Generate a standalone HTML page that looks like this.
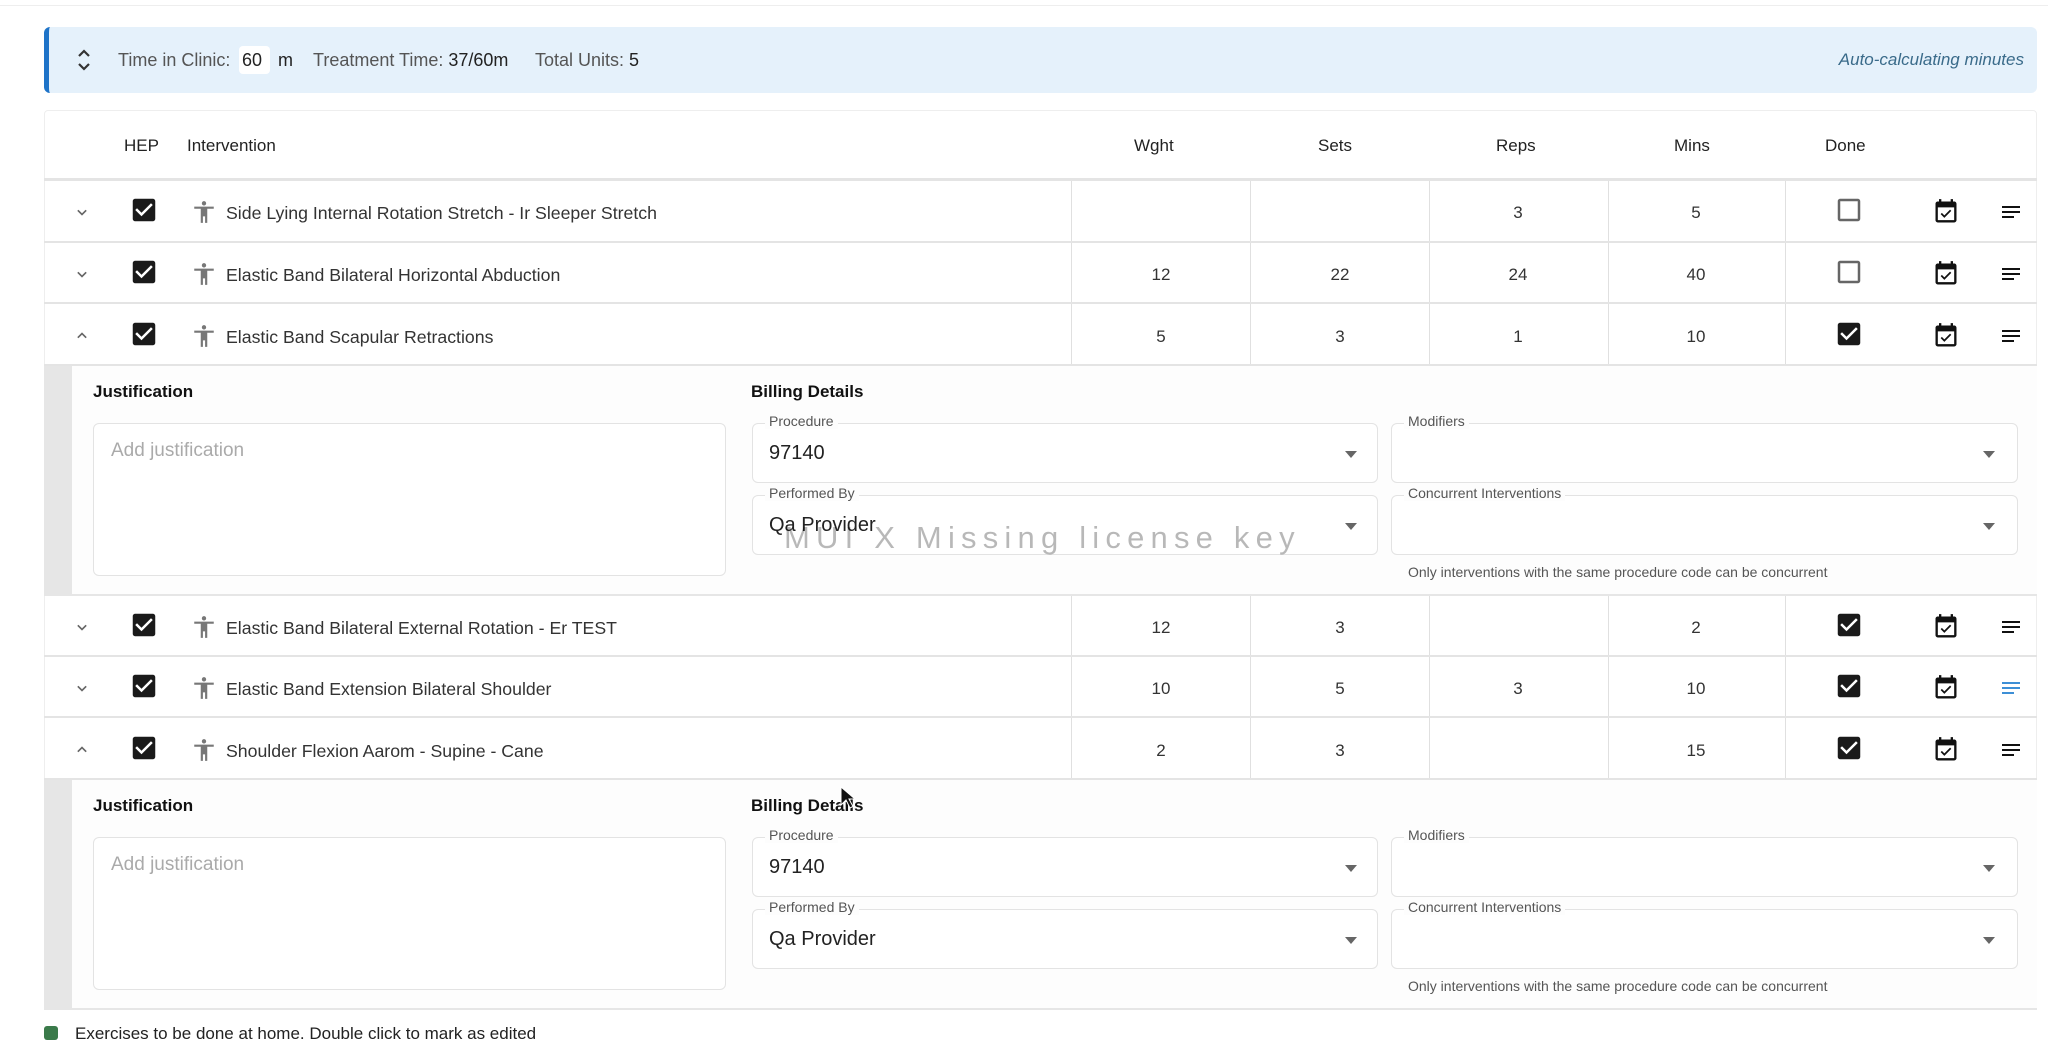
<!DOCTYPE html>
<html><head><meta charset="utf-8"><style>
*{box-sizing:border-box;margin:0;padding:0}
body{width:2048px;height:1029px;overflow:hidden;background:#fff;font-family:"Liberation Sans",sans-serif;color:#333;position:relative}
.a{position:absolute}
.banner{left:44px;top:27px;width:1993px;height:66px;background:#e5f1fb;border-left:5px solid #1e73c8;border-radius:6px}
.bt{font-size:18px;color:#555;top:50px;white-space:nowrap}
.bt b{font-weight:normal;color:#222}
.card{left:44px;top:110px;width:1993px;height:900px;background:#fff;border:1px solid #eee;border-radius:4px}
.hd{font-size:17px;color:#222;top:136px}
.row{left:44px;width:1993px;border-bottom:2px solid #e4e4e4}
.vl{position:absolute;top:0;bottom:0;width:1px;background:#e0e0e0}
.name{font-size:17.7px;color:#333;left:226px;white-space:nowrap}
.num{font-size:17px;color:#333;width:80px;text-align:center}
.panel{left:44px;width:1993px;height:230px;background:#fdfdfd;border-bottom:2px solid #e6e6e6}
.gbar{left:0;top:0;width:28px;height:100%;background:#e6e6e6}
.lbl{font-size:17px;font-weight:bold;color:#111}
.fld{border:1px solid #e3e3e3;border-radius:6px;background:#fff}
.flab{font-size:14px;color:#555;background:#fdfdfd;padding:0 4px;white-space:nowrap}
.val{font-size:20px;color:#222}
.arr{width:0;height:0;border-left:6px solid transparent;border-right:6px solid transparent;border-top:7px solid #666}
.help{font-size:14px;color:#555;white-space:nowrap}
svg{position:absolute}
</style></head><body>
<div class="a" style="left:0;top:5px;width:2048px;height:1px;background:#eee"></div>
<div class="a banner"></div>
<svg style="left:76px;top:48px" width="16" height="24" viewBox="0 0 16 24"><path d="M3 8l5-5 5 5M3 16l5 5 5-5" fill="none" stroke="#333" stroke-width="2.2"/></svg>
<div class="a bt" style="left:118px">Time in Clinic:</div>
<div class="a" style="left:239px;top:46px;width:31px;height:28px;background:#fff;border-radius:4px"></div>
<div class="a bt" style="left:242px"><b>60</b></div>
<div class="a bt" style="left:278px"><b>m</b></div>
<div class="a bt" style="left:313px">Treatment Time: <b>37/60m</b></div>
<div class="a bt" style="left:535px">Total Units: <b>5</b></div>
<div class="a bt" style="left:1830px;width:194px;text-align:right;font-style:italic;color:#3a6b8a;font-size:17px">Auto-calculating minutes</div>

<div class="a card"></div>
<div class="a hd" style="left:124px">HEP</div>
<div class="a hd" style="left:187px">Intervention</div>
<div class="a hd" style="left:1134px">Wght</div>
<div class="a hd" style="left:1318px">Sets</div>
<div class="a hd" style="left:1496px">Reps</div>
<div class="a hd" style="left:1674px">Mins</div>
<div class="a hd" style="left:1825px">Done</div>
<div class="a" style="left:44px;top:178px;width:1993px;height:3px;background:#e4e4e4"></div>

<div class="a row" style="top:181px;height:62px"><div class="vl" style="left:1027px"></div><div class="vl" style="left:1206px"></div><div class="vl" style="left:1385px"></div><div class="vl" style="left:1564px"></div><div class="vl" style="left:1741px"></div></div>
<div class="a row" style="top:243px;height:61px"><div class="vl" style="left:1027px"></div><div class="vl" style="left:1206px"></div><div class="vl" style="left:1385px"></div><div class="vl" style="left:1564px"></div><div class="vl" style="left:1741px"></div></div>
<div class="a row" style="top:304px;height:62px"><div class="vl" style="left:1027px"></div><div class="vl" style="left:1206px"></div><div class="vl" style="left:1385px"></div><div class="vl" style="left:1564px"></div><div class="vl" style="left:1741px"></div></div>
<div class="a row" style="top:596px;height:61px"><div class="vl" style="left:1027px"></div><div class="vl" style="left:1206px"></div><div class="vl" style="left:1385px"></div><div class="vl" style="left:1564px"></div><div class="vl" style="left:1741px"></div></div>
<div class="a row" style="top:657px;height:61px"><div class="vl" style="left:1027px"></div><div class="vl" style="left:1206px"></div><div class="vl" style="left:1385px"></div><div class="vl" style="left:1564px"></div><div class="vl" style="left:1741px"></div></div>
<div class="a row" style="top:718px;height:62px"><div class="vl" style="left:1027px"></div><div class="vl" style="left:1206px"></div><div class="vl" style="left:1385px"></div><div class="vl" style="left:1564px"></div><div class="vl" style="left:1741px"></div></div>

<!-- Row 1 -->
<svg style="left:72px;top:202px" width="20" height="20" viewBox="0 0 24 24"><path d="M7 10l5 5 5-5" fill="none" stroke="#666" stroke-width="2"/></svg>
<svg style="left:129px;top:195px" width="30" height="30" viewBox="0 0 24 24"><path fill="#1a1a1a" d="M19 3H5c-1.11 0-2 .9-2 2v14c0 1.1.89 2 2 2h14c1.11 0 2-.9 2-2V5c0-1.1-.89-2-2-2zm-9 14l-5-5 1.41-1.41L10 14.17l7.59-7.59L19 8l-9 9z"/></svg>
<svg style="left:191px;top:199px" width="26" height="26" viewBox="0 0 24 24"><path fill="#777" d="M12 2c1.1 0 2 .9 2 2s-.9 2-2 2-2-.9-2-2 .9-2 2-2zm9 7h-6v13h-2v-6h-2v6H9V9H3V7h18v2z"/></svg>
<div class="a name" style="top:203px">Side Lying Internal Rotation Stretch - Ir Sleeper Stretch</div>
<div class="a num" style="left:1478px;top:203px">3</div>
<div class="a num" style="left:1656px;top:203px">5</div>
<svg style="left:1834px;top:195px" width="30" height="30" viewBox="0 0 24 24"><path fill="#666" d="M19 5v14H5V5h14m0-2H5c-1.1 0-2 .9-2 2v14c0 1.1.9 2 2 2h14c1.1 0 2-.9 2-2V5c0-1.1-.9-2-2-2z"/></svg>
<svg style="left:1932px;top:198px" width="28" height="28" viewBox="0 0 24 24"><path fill="#111" d="M16.53 11.06L15.47 10l-4.88 4.88-2.12-2.12-1.06 1.06L10.59 17l5.94-5.94zM19 3h-1V1h-2v2H8V1H6v2H5c-1.11 0-1.99.9-1.99 2L3 19c0 1.1.89 2 2 2h14c1.1 0 2-.9 2-2V5c0-1.1-.9-2-2-2zm0 16H5V8h14v11z"/></svg>
<svg style="left:1999px;top:200px" width="24" height="24" viewBox="0 0 24 24"><path fill="#111" d="M3 6h18v2H3zM3 11h18v2H3zM3 16h12v2H3z"/></svg>

<!-- Row 2 -->
<svg style="left:72px;top:264px" width="20" height="20" viewBox="0 0 24 24"><path d="M7 10l5 5 5-5" fill="none" stroke="#666" stroke-width="2"/></svg>
<svg style="left:129px;top:257px" width="30" height="30" viewBox="0 0 24 24"><path fill="#1a1a1a" d="M19 3H5c-1.11 0-2 .9-2 2v14c0 1.1.89 2 2 2h14c1.11 0 2-.9 2-2V5c0-1.1-.89-2-2-2zm-9 14l-5-5 1.41-1.41L10 14.17l7.59-7.59L19 8l-9 9z"/></svg>
<svg style="left:191px;top:261px" width="26" height="26" viewBox="0 0 24 24"><path fill="#777" d="M12 2c1.1 0 2 .9 2 2s-.9 2-2 2-2-.9-2-2 .9-2 2-2zm9 7h-6v13h-2v-6h-2v6H9V9H3V7h18v2z"/></svg>
<div class="a name" style="top:265px">Elastic Band Bilateral Horizontal Abduction</div>
<div class="a num" style="left:1121px;top:265px">12</div>
<div class="a num" style="left:1300px;top:265px">22</div>
<div class="a num" style="left:1478px;top:265px">24</div>
<div class="a num" style="left:1656px;top:265px">40</div>
<svg style="left:1834px;top:257px" width="30" height="30" viewBox="0 0 24 24"><path fill="#666" d="M19 5v14H5V5h14m0-2H5c-1.1 0-2 .9-2 2v14c0 1.1.9 2 2 2h14c1.1 0 2-.9 2-2V5c0-1.1-.9-2-2-2z"/></svg>
<svg style="left:1932px;top:260px" width="28" height="28" viewBox="0 0 24 24"><path fill="#111" d="M16.53 11.06L15.47 10l-4.88 4.88-2.12-2.12-1.06 1.06L10.59 17l5.94-5.94zM19 3h-1V1h-2v2H8V1H6v2H5c-1.11 0-1.99.9-1.99 2L3 19c0 1.1.89 2 2 2h14c1.1 0 2-.9 2-2V5c0-1.1-.9-2-2-2zm0 16H5V8h14v11z"/></svg>
<svg style="left:1999px;top:262px" width="24" height="24" viewBox="0 0 24 24"><path fill="#111" d="M3 6h18v2H3zM3 11h18v2H3zM3 16h12v2H3z"/></svg>

<!-- Row 3 -->
<svg style="left:72px;top:326px" width="20" height="20" viewBox="0 0 24 24"><path d="M7 14l5-5 5 5" fill="none" stroke="#666" stroke-width="2"/></svg>
<svg style="left:129px;top:319px" width="30" height="30" viewBox="0 0 24 24"><path fill="#1a1a1a" d="M19 3H5c-1.11 0-2 .9-2 2v14c0 1.1.89 2 2 2h14c1.11 0 2-.9 2-2V5c0-1.1-.89-2-2-2zm-9 14l-5-5 1.41-1.41L10 14.17l7.59-7.59L19 8l-9 9z"/></svg>
<svg style="left:191px;top:323px" width="26" height="26" viewBox="0 0 24 24"><path fill="#777" d="M12 2c1.1 0 2 .9 2 2s-.9 2-2 2-2-.9-2-2 .9-2 2-2zm9 7h-6v13h-2v-6h-2v6H9V9H3V7h18v2z"/></svg>
<div class="a name" style="top:327px">Elastic Band Scapular Retractions</div>
<div class="a num" style="left:1121px;top:327px">5</div>
<div class="a num" style="left:1300px;top:327px">3</div>
<div class="a num" style="left:1478px;top:327px">1</div>
<div class="a num" style="left:1656px;top:327px">10</div>
<svg style="left:1834px;top:319px" width="30" height="30" viewBox="0 0 24 24"><path fill="#1a1a1a" d="M19 3H5c-1.11 0-2 .9-2 2v14c0 1.1.89 2 2 2h14c1.11 0 2-.9 2-2V5c0-1.1-.89-2-2-2zm-9 14l-5-5 1.41-1.41L10 14.17l7.59-7.59L19 8l-9 9z"/></svg>
<svg style="left:1932px;top:322px" width="28" height="28" viewBox="0 0 24 24"><path fill="#111" d="M16.53 11.06L15.47 10l-4.88 4.88-2.12-2.12-1.06 1.06L10.59 17l5.94-5.94zM19 3h-1V1h-2v2H8V1H6v2H5c-1.11 0-1.99.9-1.99 2L3 19c0 1.1.89 2 2 2h14c1.1 0 2-.9 2-2V5c0-1.1-.9-2-2-2zm0 16H5V8h14v11z"/></svg>
<svg style="left:1999px;top:324px" width="24" height="24" viewBox="0 0 24 24"><path fill="#111" d="M3 6h18v2H3zM3 11h18v2H3zM3 16h12v2H3z"/></svg>

<!-- Panel 1 -->
<div class="a panel" style="top:366px">
 <div class="a gbar"></div>
 <div class="a lbl" style="left:49px;top:16px">Justification</div>
 <div class="a fld" style="left:49px;top:57px;width:633px;height:153px"></div>
 <div class="a" style="left:67px;top:74px;font-size:19px;color:#aaa">Add justification</div>
 <div class="a lbl" style="left:707px;top:16px">Billing Details</div>
 <div class="a fld" style="left:708px;top:57px;width:626px;height:60px"></div>
 <div class="a flab" style="left:721px;top:47px">Procedure</div>
 <div class="a val" style="left:725px;top:76px">97140</div>
 <div class="a arr" style="left:1301px;top:85px"></div>
 <div class="a fld" style="left:708px;top:129px;width:626px;height:60px"></div>
 <div class="a flab" style="left:721px;top:119px">Performed By</div>
 <div class="a val" style="left:725px;top:148px">Qa Provider</div>
 <div class="a arr" style="left:1301px;top:157px"></div>
 <div class="a fld" style="left:1347px;top:57px;width:627px;height:60px"></div>
 <div class="a flab" style="left:1360px;top:47px">Modifiers</div>
 <div class="a arr" style="left:1939px;top:85px"></div>
 <div class="a fld" style="left:1347px;top:129px;width:627px;height:60px"></div>
 <div class="a flab" style="left:1360px;top:119px">Concurrent Interventions</div>
 <div class="a arr" style="left:1939px;top:157px"></div>
 <div class="a help" style="left:1364px;top:198px">Only interventions with the same procedure code can be concurrent</div>
</div>
<div class="a" style="left:784px;top:520px;font-size:31px;letter-spacing:6.2px;color:rgba(0,0,0,0.28);white-space:nowrap">MUI X Missing license key</div>

<!-- Row 4 -->
<svg style="left:72px;top:617px" width="20" height="20" viewBox="0 0 24 24"><path d="M7 10l5 5 5-5" fill="none" stroke="#666" stroke-width="2"/></svg>
<svg style="left:129px;top:610px" width="30" height="30" viewBox="0 0 24 24"><path fill="#1a1a1a" d="M19 3H5c-1.11 0-2 .9-2 2v14c0 1.1.89 2 2 2h14c1.11 0 2-.9 2-2V5c0-1.1-.89-2-2-2zm-9 14l-5-5 1.41-1.41L10 14.17l7.59-7.59L19 8l-9 9z"/></svg>
<svg style="left:191px;top:614px" width="26" height="26" viewBox="0 0 24 24"><path fill="#777" d="M12 2c1.1 0 2 .9 2 2s-.9 2-2 2-2-.9-2-2 .9-2 2-2zm9 7h-6v13h-2v-6h-2v6H9V9H3V7h18v2z"/></svg>
<div class="a name" style="top:618px">Elastic Band Bilateral External Rotation - Er TEST</div>
<div class="a num" style="left:1121px;top:618px">12</div>
<div class="a num" style="left:1300px;top:618px">3</div>
<div class="a num" style="left:1656px;top:618px">2</div>
<svg style="left:1834px;top:610px" width="30" height="30" viewBox="0 0 24 24"><path fill="#1a1a1a" d="M19 3H5c-1.11 0-2 .9-2 2v14c0 1.1.89 2 2 2h14c1.11 0 2-.9 2-2V5c0-1.1-.89-2-2-2zm-9 14l-5-5 1.41-1.41L10 14.17l7.59-7.59L19 8l-9 9z"/></svg>
<svg style="left:1932px;top:613px" width="28" height="28" viewBox="0 0 24 24"><path fill="#111" d="M16.53 11.06L15.47 10l-4.88 4.88-2.12-2.12-1.06 1.06L10.59 17l5.94-5.940zM19 3h-1V1h-2v2H8V1H6v2H5c-1.11 0-1.99.9-1.99 2L3 19c0 1.1.89 2 2 2h14c1.1 0 2-.9 2-2V5c0-1.1-.9-2-2-2zm0 16H5V8h14v11z"/></svg>
<svg style="left:1999px;top:615px" width="24" height="24" viewBox="0 0 24 24"><path fill="#111" d="M3 6h18v2H3zM3 11h18v2H3zM3 16h12v2H3z"/></svg>

<!-- Row 5 -->
<svg style="left:72px;top:678px" width="20" height="20" viewBox="0 0 24 24"><path d="M7 10l5 5 5-5" fill="none" stroke="#666" stroke-width="2"/></svg>
<svg style="left:129px;top:671px" width="30" height="30" viewBox="0 0 24 24"><path fill="#1a1a1a" d="M19 3H5c-1.11 0-2 .9-2 2v14c0 1.1.89 2 2 2h14c1.11 0 2-.9 2-2V5c0-1.1-.89-2-2-2zm-9 14l-5-5 1.41-1.41L10 14.17l7.59-7.59L19 8l-9 9z"/></svg>
<svg style="left:191px;top:675px" width="26" height="26" viewBox="0 0 24 24"><path fill="#777" d="M12 2c1.1 0 2 .9 2 2s-.9 2-2 2-2-.9-2-2 .9-2 2-2zm9 7h-6v13h-2v-6h-2v6H9V9H3V7h18v2z"/></svg>
<div class="a name" style="top:679px">Elastic Band Extension Bilateral Shoulder</div>
<div class="a num" style="left:1121px;top:679px">10</div>
<div class="a num" style="left:1300px;top:679px">5</div>
<div class="a num" style="left:1478px;top:679px">3</div>
<div class="a num" style="left:1656px;top:679px">10</div>
<svg style="left:1834px;top:671px" width="30" height="30" viewBox="0 0 24 24"><path fill="#1a1a1a" d="M19 3H5c-1.11 0-2 .9-2 2v14c0 1.1.89 2 2 2h14c1.11 0 2-.9 2-2V5c0-1.1-.89-2-2-2zm-9 14l-5-5 1.41-1.41L10 14.17l7.59-7.59L19 8l-9 9z"/></svg>
<svg style="left:1932px;top:674px" width="28" height="28" viewBox="0 0 24 24"><path fill="#111" d="M16.53 11.06L15.47 10l-4.88 4.88-2.12-2.12-1.06 1.06L10.59 17l5.94-5.94zM19 3h-1V1h-2v2H8V1H6v2H5c-1.11 0-1.99.9-1.99 2L3 19c0 1.1.89 2 2 2h14c1.1 0 2-.9 2-2V5c0-1.1-.9-2-2-2zm0 16H5V8h14v11z"/></svg>
<svg style="left:1999px;top:676px" width="24" height="24" viewBox="0 0 24 24"><path fill="#3d8fd6" d="M3 6h18v2H3zM3 11h18v2H3zM3 16h12v2H3z"/></svg>

<!-- Row 6 -->
<svg style="left:72px;top:740px" width="20" height="20" viewBox="0 0 24 24"><path d="M7 14l5-5 5 5" fill="none" stroke="#666" stroke-width="2"/></svg>
<svg style="left:129px;top:733px" width="30" height="30" viewBox="0 0 24 24"><path fill="#1a1a1a" d="M19 3H5c-1.11 0-2 .9-2 2v14c0 1.1.89 2 2 2h14c1.11 0 2-.9 2-2V5c0-1.1-.89-2-2-2zm-9 14l-5-5 1.41-1.41L10 14.17l7.59-7.59L19 8l-9 9z"/></svg>
<svg style="left:191px;top:737px" width="26" height="26" viewBox="0 0 24 24"><path fill="#777" d="M12 2c1.1 0 2 .9 2 2s-.9 2-2 2-2-.9-2-2 .9-2 2-2zm9 7h-6v13h-2v-6h-2v6H9V9H3V7h18v2z"/></svg>
<div class="a name" style="top:741px">Shoulder Flexion Aarom - Supine - Cane</div>
<div class="a num" style="left:1121px;top:741px">2</div>
<div class="a num" style="left:1300px;top:741px">3</div>
<div class="a num" style="left:1656px;top:741px">15</div>
<svg style="left:1834px;top:733px" width="30" height="30" viewBox="0 0 24 24"><path fill="#1a1a1a" d="M19 3H5c-1.11 0-2 .9-2 2v14c0 1.1.89 2 2 2h14c1.11 0 2-.9 2-2V5c0-1.1-.89-2-2-2zm-9 14l-5-5 1.41-1.41L10 14.17l7.59-7.59L19 8l-9 9z"/></svg>
<svg style="left:1932px;top:736px" width="28" height="28" viewBox="0 0 24 24"><path fill="#111" d="M16.53 11.06L15.47 10l-4.88 4.88-2.12-2.12-1.06 1.06L10.59 17l5.94-5.94zM19 3h-1V1h-2v2H8V1H6v2H5c-1.11 0-1.99.9-1.99 2L3 19c0 1.1.89 2 2 2h14c1.1 0 2-.9 2-2V5c0-1.1-.9-2-2-2zm0 16H5V8h14v11z"/></svg>
<svg style="left:1999px;top:738px" width="24" height="24" viewBox="0 0 24 24"><path fill="#111" d="M3 6h18v2H3zM3 11h18v2H3zM3 16h12v2H3z"/></svg>

<!-- Panel 2 -->
<div class="a panel" style="top:780px">
 <div class="a gbar"></div>
 <div class="a lbl" style="left:49px;top:16px">Justification</div>
 <div class="a fld" style="left:49px;top:57px;width:633px;height:153px"></div>
 <div class="a" style="left:67px;top:74px;font-size:19px;color:#aaa">Add justification</div>
 <div class="a lbl" style="left:707px;top:16px">Billing Details</div>
 <div class="a fld" style="left:708px;top:57px;width:626px;height:60px"></div>
 <div class="a flab" style="left:721px;top:47px">Procedure</div>
 <div class="a val" style="left:725px;top:76px">97140</div>
 <div class="a arr" style="left:1301px;top:85px"></div>
 <div class="a fld" style="left:708px;top:129px;width:626px;height:60px"></div>
 <div class="a flab" style="left:721px;top:119px">Performed By</div>
 <div class="a val" style="left:725px;top:148px">Qa Provider</div>
 <div class="a arr" style="left:1301px;top:157px"></div>
 <div class="a fld" style="left:1347px;top:57px;width:627px;height:60px"></div>
 <div class="a flab" style="left:1360px;top:47px">Modifiers</div>
 <div class="a arr" style="left:1939px;top:85px"></div>
 <div class="a fld" style="left:1347px;top:129px;width:627px;height:60px"></div>
 <div class="a flab" style="left:1360px;top:119px">Concurrent Interventions</div>
 <div class="a arr" style="left:1939px;top:157px"></div>
 <div class="a help" style="left:1364px;top:198px">Only interventions with the same procedure code can be concurrent</div>
</div>
<svg style="left:840px;top:786px" width="16" height="24" viewBox="0 0 16 24"><path d="M1 1v18l5-5 4 8 3-1.5-4-7.5h6z" fill="#111" stroke="#fff" stroke-width="1"/></svg>

<div class="a" style="left:44px;top:1026px;width:14px;height:14px;background:#3a7a4a;border-radius:3px"></div>
<div class="a" style="left:75px;top:1024px;font-size:17px;color:#222;white-space:nowrap">Exercises to be done at home. Double click to mark as edited</div>
</body></html>
